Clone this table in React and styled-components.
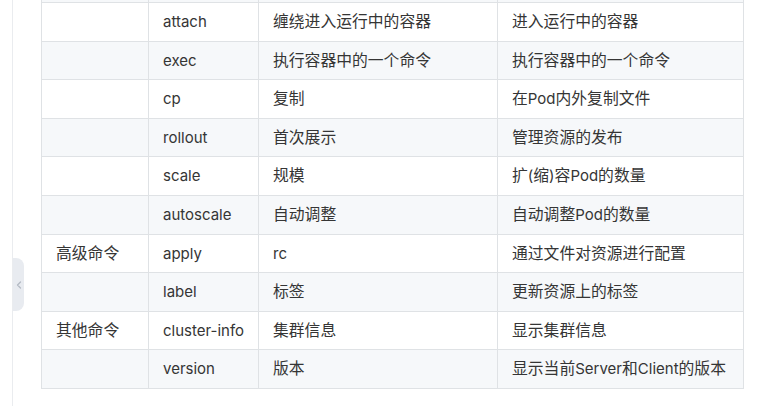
import React from "react";
import styled, { createGlobalStyle } from "styled-components";

const GlobalStyle = createGlobalStyle`
  html, body {
    margin: 0;
    padding: 0;
    background: #ffffff;
    overflow: hidden;
  }
  body {
    font-family: Inter, "Noto Sans CJK SC", sans-serif;
    color: #353535;
  }
`;

const Page = styled.div`
  display: flex;
  height: 406px;
  position: relative;
`;

const SidebarEdge = styled.div`
  width: 12px;
  flex-shrink: 0;
  border-right: 1px solid #eaecef;
`;

const ToggleTab = styled.div`
  position: absolute;
  left: 13px;
  top: 258px;
  width: 11px;
  height: 53px;
  background: #e8ebf0;
  border-radius: 0 8px 8px 0;
  display: flex;
  align-items: center;
  justify-content: center;
  color: #b4bac4;
`;

const Content = styled.div`
  flex: 1;
  padding-left: 28px;
  padding-right: 18px;
  overflow: hidden;
`;

const Table = styled.table`
  border-collapse: collapse;
  table-layout: fixed;
  width: 702px;
  margin-top: -36.6px;
  font-size: 15px;
`;

const Col = styled.col`
  width: ${(p) => p.$w}px;
`;

const Row = styled.tr`
  background: ${(p) => (p.$striped ? "#f6f8fa" : "#ffffff")};
`;

const Cell = styled.td`
  border: 1px solid #dfe2e5;
  padding: 8px 14px;
  line-height: 21.6px;
  height: 21.6px;
  white-space: nowrap;
  overflow: hidden;
`;

const Cjk = styled.span`
  font-family: "Noto Sans CJK SC", sans-serif;
  font-size: 15.8px;
  line-height: 1;
`;

const widths = [107, 110, 239, 246];

const rows = [
  ["", "", "", ""],
  ["", "attach", "缠绕进入运行中的容器", "进入运行中的容器"],
  ["", "exec", "执行容器中的一个命令", "执行容器中的一个命令"],
  ["", "cp", "复制", "在Pod内外复制文件"],
  ["", "rollout", "首次展示", "管理资源的发布"],
  ["", "scale", "规模", "扩(缩)容Pod的数量"],
  ["", "autoscale", "自动调整", "自动调整Pod的数量"],
  ["高级命令", "apply", "rc", "通过文件对资源进行配置"],
  ["", "label", "标签", "更新资源上的标签"],
  ["其他命令", "cluster-info", "集群信息", "显示集群信息"],
  ["", "version", "版本", "显示当前Server和Client的版本"],
];

// split mixed text so the Chinese runs get their own font size
function Mixed({ text }) {
  const parts = text.split(/([\u4e00-\u9fff]+)/).filter(Boolean);
  return parts.map((p, i) =>
    /[\u4e00-\u9fff]/.test(p) ? <Cjk key={i}>{p}</Cjk> : <React.Fragment key={i}>{p}</React.Fragment>
  );
}

export default function App() {
  return (
    <>
      <GlobalStyle />
      <Page>
        <SidebarEdge />
        <ToggleTab>
          <svg width="6" height="8" viewBox="0 0 6 8" fill="none">
            <path d="M4.5 1 L1.5 4 L4.5 7" stroke="currentColor" strokeWidth="1.3" strokeLinecap="round" strokeLinejoin="round" />
          </svg>
        </ToggleTab>
        <Content>
          <Table>
            <colgroup>
              {widths.map((w, i) => (
                <Col key={i} $w={w} />
              ))}
            </colgroup>
            <tbody>
              {rows.map((r, i) => (
                <Row key={i} $striped={i % 2 === 0}>
                  {r.map((c, j) => (
                    <Cell key={j}>
                      <Mixed text={c} />
                    </Cell>
                  ))}
                </Row>
              ))}
            </tbody>
          </Table>
        </Content>
      </Page>
    </>
  );
}
